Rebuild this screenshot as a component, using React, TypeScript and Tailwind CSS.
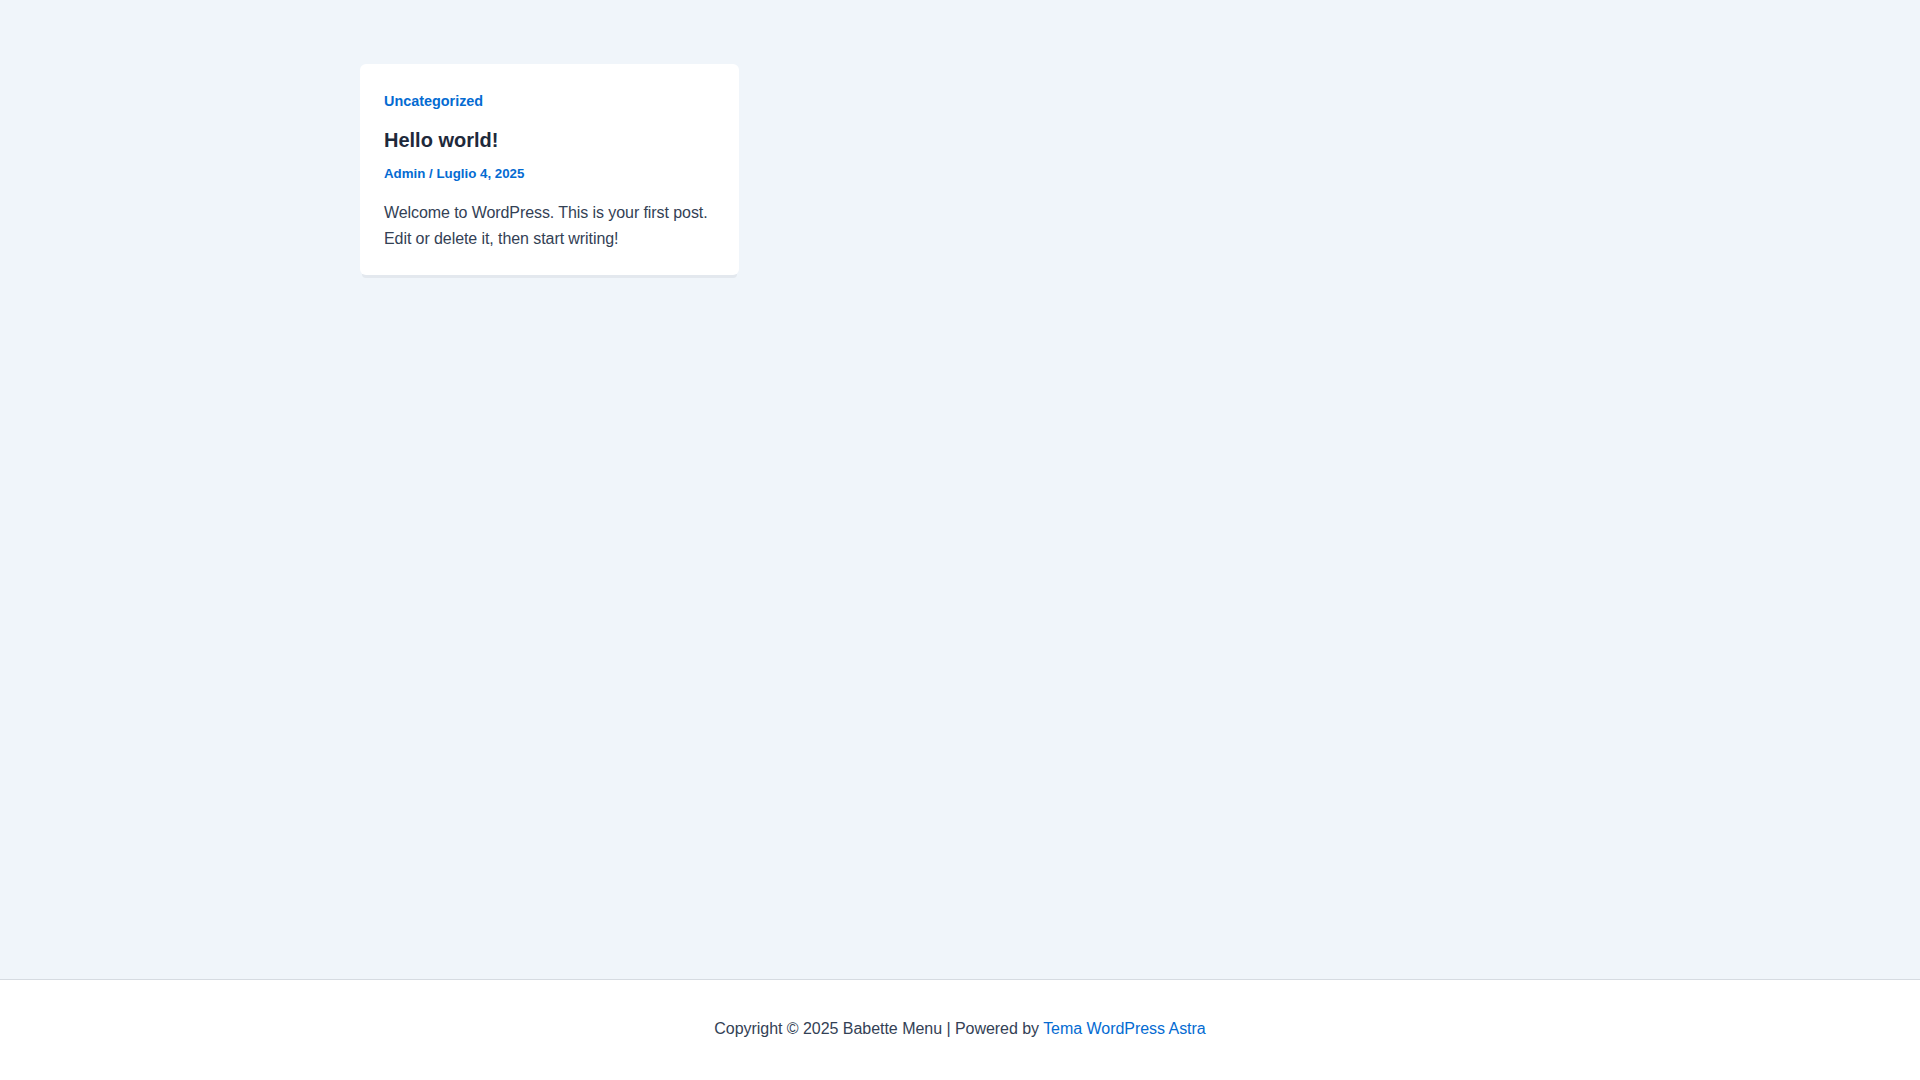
export default function App() {
  return (
    <div className="min-h-screen flex flex-col bg-[#f0f5fa] font-['Liberation_Sans',Arial,sans-serif]">
      <main className="flex-1 pt-16">
        <div className="max-w-[1200px] mx-auto grid grid-cols-3 gap-8">
          <article className="bg-white rounded-md px-6 pt-6 pb-[22px] shadow-[0_5px_0_-2px_#e3e8ee]">
            <a href="#" className="block text-[14.4px] leading-[26px] font-bold text-[#046bd2]">
              Uncategorized
            </a>
            <h2 className="mt-[11px] text-[20px] leading-[30px] font-semibold text-[#1e293b]">
              <a href="#">Hello world!</a>
            </h2>
            <div className="mt-[9px] text-[13.3px] leading-5 font-bold text-[#046bd2]">
              <a href="#">Admin</a> / <span>Luglio 4, 2025</span>
            </div>
            <p className="mt-4 text-base leading-[26.4px] tracking-[-0.08px] text-[#334155]">
              Welcome to WordPress. This is your first post. Edit or delete it, then start writing!
            </p>
          </article>
        </div>
      </main>
      <footer className="bg-white border-t border-[#d6dbe1] pt-[37px] pb-[39px]">
        <p className="text-center text-base leading-6 tracking-[-0.04px] text-[#334155]">
          Copyright © 2025 Babette Menu | Powered by{" "}
          <a href="#" className="text-[#046bd2]">
            Tema WordPress Astra
          </a>
        </p>
      </footer>
    </div>
  );
}
